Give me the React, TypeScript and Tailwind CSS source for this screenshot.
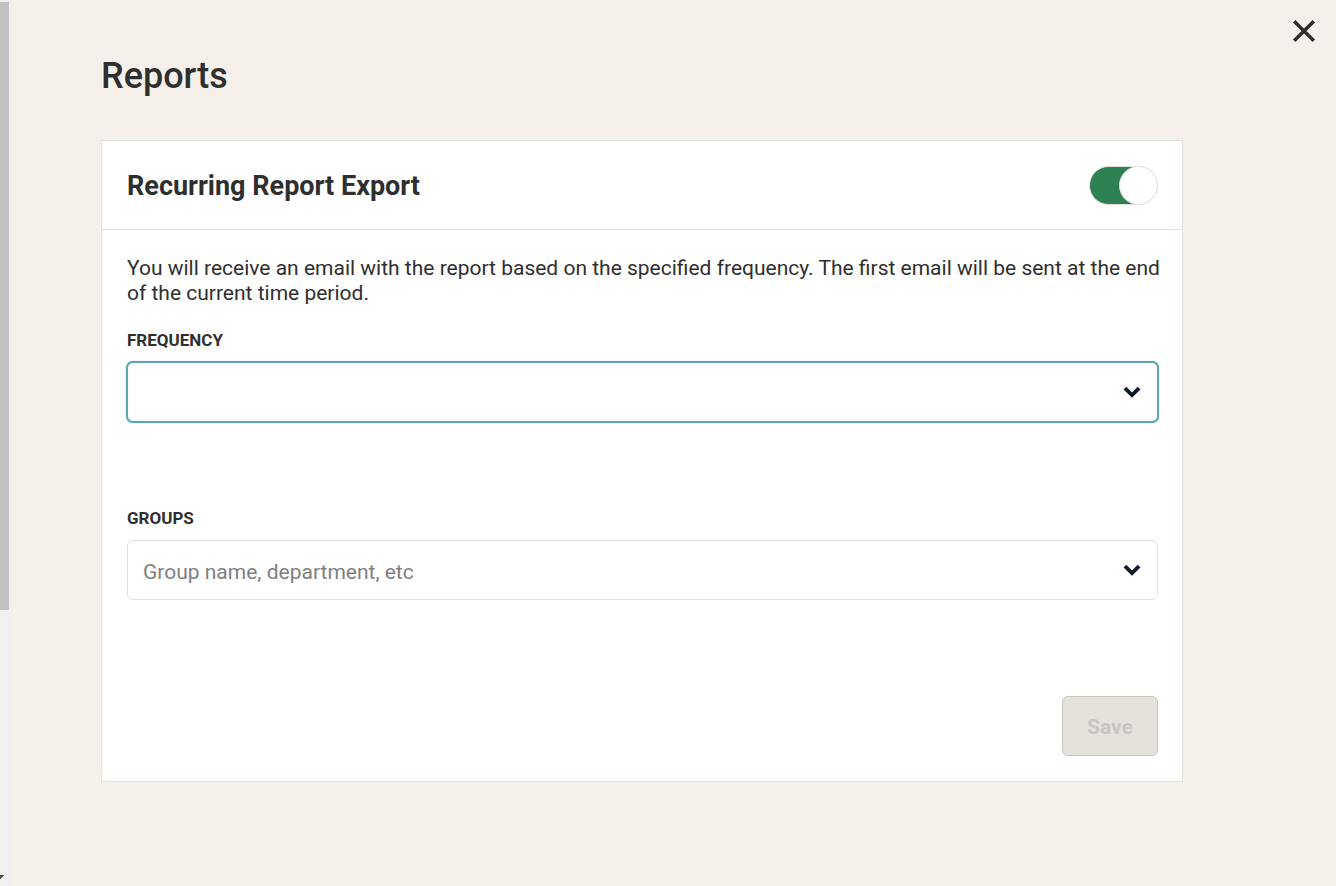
import { FunctionComponent, useState } from 'react'

const frequencies = ['Daily', 'Weekly', 'Monthly', 'Quarterly']

const ChevronIcon: FunctionComponent = () => (
  <svg
    className="pointer-events-none absolute right-[17px] top-6 h-3 w-[18px] text-[#11182b]"
    viewBox="0 0 18 12"
    fill="none"
    stroke="currentColor"
    strokeWidth="3.8"
    aria-hidden="true"
  >
    <path d="M1.9 2.1 9 9l7.1-6.9" />
  </svg>
)

const ScrollTrack: FunctionComponent = () => (
  <div
    className="flex w-[11px] shrink-0 flex-col justify-between bg-[#f0f0f0] pt-0.5 pb-1.5"
    aria-hidden="true"
  >
    <div className="h-[608px] w-[9px] bg-[#c1c1c1]" />
    <svg className="h-[5px] w-[5px]" viewBox="0 0 5 5" fill="#505050">
      <path d="M0 0h4.5L0 4.5z" />
    </svg>
  </div>
)

export default function App() {
  const [enabled, setEnabled] = useState<boolean>(true)
  const [frequency, setFrequency] = useState<string>('')
  const [groups, setGroups] = useState<string>('')

  const isSaveDisabled = !enabled || frequency === '' || groups === ''

  return (
    <div className="flex min-h-screen bg-[#f5f0ea] font-['Roboto',sans-serif] text-[#2f2f2f]">
      <ScrollTrack />
      <main className="relative min-w-0 grow pt-[52px] pr-[153px] pb-12 pl-[90px]">
        <button
          type="button"
          className="absolute top-[15px] right-4 flex h-8 w-8 items-center justify-center"
          aria-label="Close"
        >
          <svg
            className="h-6 w-6"
            viewBox="0 0 24 24"
            fill="none"
            stroke="currentColor"
            strokeWidth="3.5"
            aria-hidden="true"
          >
            <path d="M2.2 2.2l19.6 19.6M21.8 2.2 2.2 21.8" />
          </svg>
        </button>

        <h1 className="text-[36px] leading-[48px] font-medium">Reports</h1>

        <section className="mt-10 border border-[#e5e2dc] bg-white">
          <header className="flex items-center justify-between border-b border-[#e5e2dc] py-6 pr-6 pl-[25px]">
            <h2
              id="export-title"
              className="pt-0.5 text-[27px] leading-[38px] font-bold"
            >
              Recurring Report Export
            </h2>
            <input
              type="checkbox"
              role="switch"
              aria-labelledby="export-title"
              className="flex h-[39px] w-[69px] cursor-pointer appearance-none rounded-full border border-[#e3e1db] bg-[#cbc8c1] before:-my-px before:-ml-px before:h-[39px] before:w-[39px] before:rounded-full before:border before:border-[#e3e1db] before:bg-white checked:justify-end checked:bg-[#2e8153] checked:before:-mr-px checked:before:ml-0"
              checked={enabled}
              onChange={e => setEnabled(e.target.checked)}
            />
          </header>

          <form
            className="pt-[26px] pr-6 pb-[25px] pl-[25px]"
            onSubmit={e => e.preventDefault()}
          >
            <p className="-mr-3 text-[21px] leading-[25px]">
              You will receive an email with the report based on the specified
              frequency. The first email will be sent at the end of the current
              time period.
            </p>

            <label
              htmlFor="frequency"
              className="mt-[22px] block text-[17px] leading-6 font-bold uppercase"
            >
              Frequency
            </label>
            <div className="relative mt-2.5">
              <select
                id="frequency"
                className="block h-[60px] w-full appearance-none rounded-md border border-[#5aa5b7] bg-white px-4 text-[21px] shadow-[0_0_1px_1px_#5aa5b7] ring-1 ring-[#5aa5b7] outline-none"
                value={frequency}
                onChange={e => setFrequency(e.target.value)}
              >
                <option value="" />
                {frequencies.map(name => (
                  <option key={name} value={name}>
                    {name}
                  </option>
                ))}
              </select>
              <ChevronIcon />
            </div>

            <label
              htmlFor="groups"
              className="mt-[84px] block text-[17px] leading-6 font-bold uppercase"
            >
              Groups
            </label>
            <div className="relative mt-2.5">
              <input
                type="text"
                id="groups"
                className="block h-[60px] w-full rounded-md border border-[#e3e1db] bg-white px-[15px] pt-1 text-[21px] outline-none placeholder:text-[#7f7f7f]"
                placeholder="Group name, department, etc"
                value={groups}
                onChange={e => setGroups(e.target.value)}
              />
              <ChevronIcon />
            </div>

            <div className="mt-24 flex justify-end">
              <button
                type="submit"
                disabled={isSaveDisabled}
                className="h-[60px] w-24 rounded-md border border-[#2e8153] bg-[#2e8153] pt-1 text-[21px] font-bold text-white disabled:border-[#c9c6c1] disabled:bg-[#e5e2db] disabled:text-[#c9c6c1]"
              >
                Save
              </button>
            </div>
          </form>
        </section>
      </main>
    </div>
  )
}
